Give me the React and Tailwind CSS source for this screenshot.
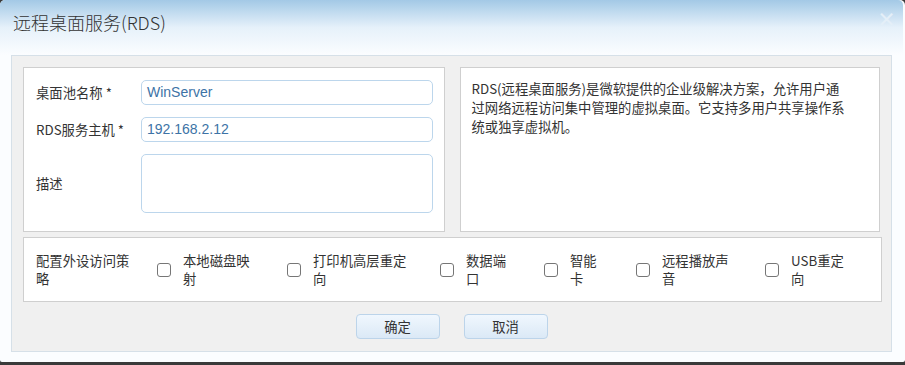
import React from 'react'

const font = { fontFamily: '"Noto Sans CJK SC", "Liberation Sans", sans-serif' }
const latin = { fontFamily: '"Liberation Sans", "Noto Sans CJK SC", sans-serif' }

const devices = [
  { label: '本地磁盘映射', box: 'w-[130px]', text: 'w-[68px]' },
  { label: '打印机高层重定向', box: 'w-[153px]', text: 'w-[95px]' },
  { label: '数据端口', box: 'w-[104px]', text: 'w-[41px]' },
  { label: '智能卡', box: 'w-[92px]', text: 'w-[28px]' },
  { label: '远程播放声音', box: 'w-[129px]', text: 'w-[68px]' },
  { label: 'USB重定向', box: 'w-[100px]', text: 'w-[58px]' },
]

const Field = ({ label, value, tall }) => (
  <div className="flex items-center">
    <div className="w-[105px] text-[13.33px] text-[#333]">{label}</div>
    <div
      className={`w-[292px] ${tall ? 'h-[59px]' : 'h-[25px]'} rounded-[5px] border border-[#bcd6ec] bg-white px-[5px] text-[14px] leading-[23px] text-[#3d73a6]`}
      style={latin}
    >
      {value}
    </div>
  </div>
)

const Button = ({ children }) => (
  <button className="h-[25px] w-[84px] rounded-[4px] border border-[#bcd4ea] bg-gradient-to-b from-[#f0f7fe] to-[#dbe9f6] text-[13.33px] text-[#333]">
    {children}
  </button>
)

export default function App() {
  return (
    <div className="h-[365px] w-[905px] bg-[#3a3a3a]" style={font}>
      <div className="flex h-[362px] flex-col rounded-t-[5px] rounded-b-[2px] bg-[#fbfdff] pr-[2px]">
        {/* Title bar */}
        <div className="relative flex h-[55px] items-start rounded-t-[5px] bg-gradient-to-b from-[#a3c9e6] via-[#e6f1fa] to-[#fbfdff] px-[13px] pt-[9px]">
          <h1 className="text-[18px] font-light text-[#333]">远程桌面服务(RDS)</h1>
          <span className="absolute right-[7px] top-[5px] text-[19px] font-bold text-[#e4eff8]">×</span>
        </div>

        {/* Content */}
        <div className="mx-[11px] mb-[10px] flex flex-1 flex-col border border-[#d6e0e8] bg-[#f0f0f0] px-[11px] pt-[11px]">
          <div className="flex gap-[15px]">
            <div className="flex h-[165px] w-[422px] flex-col gap-[12px] border border-[#cfcfcf] bg-white pl-[12px] pt-[12px]">
              <Field label="桌面池名称 *" value="WinServer" />
              <Field label="RDS服务主机 *" value="192.168.2.12" />
              <Field label="描述" value="" tall />
            </div>
            <div className="h-[165px] w-[421px] border border-[#cfcfcf] bg-white pl-[11px] pt-[11px]">
              <p className="w-[377px] text-[13.33px] leading-[19px] text-[#333]">
                RDS(远程桌面服务)是微软提供的企业级解决方案，允许用户通过网络远程访问集中管理的虚拟桌面。它支持多用户共享操作系统或独享虚拟机。
              </p>
            </div>
          </div>

          <div className="mt-[5px] flex h-[65px] w-[859px] items-center border border-[#cfcfcf] bg-white pl-[12px]">
            <div className="w-[121px] text-[13.33px] leading-[18px] text-[#333]">
              <div className="w-[95px]">配置外设访问策略</div>
            </div>
            {devices.map((d) => (
              <div key={d.label} className={`flex items-center ${d.box}`}>
                <span className="h-[14px] w-[14px] shrink-0 rounded-[3px] border border-[#767676] bg-white" />
                <span className={`ml-[12px] text-[13.33px] leading-[18px] text-[#333] ${d.text}`}>{d.label}</span>
              </div>
            ))}
          </div>

          <div className="flex justify-center gap-[24px] pt-[12px]">
            <Button>确定</Button>
            <Button>取消</Button>
          </div>
        </div>
      </div>
    </div>
  )
}
